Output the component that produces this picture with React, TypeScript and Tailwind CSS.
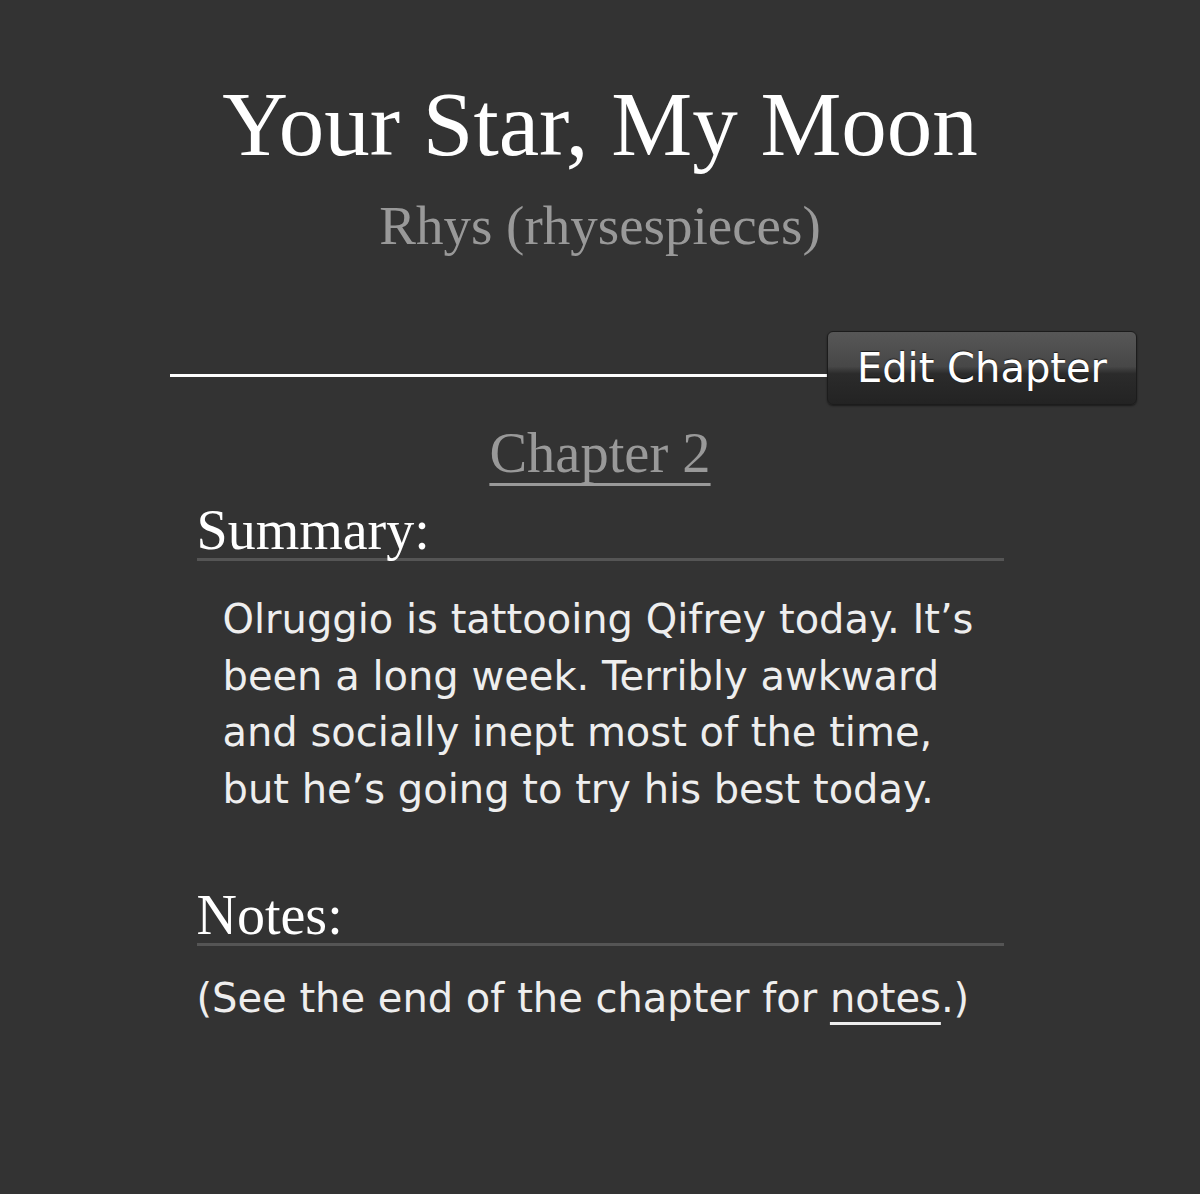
import React from 'react';

const serif = { fontFamily: '"Liberation Serif", Georgia, serif' };
const sans = { fontFamily: '"DejaVu Sans", Verdana, sans-serif' };

export default function App() {
  return (
    <div className="min-h-[1194px] bg-[#333333] text-white overflow-hidden">
      {/* Work header */}
      <div className="flex flex-col items-center pt-[75px]" style={serif}>
        <h1 className="text-[91px] leading-[100px] text-white">Your Star, My Moon</h1>
        <h2 className="text-[55px] leading-[60px] mt-[21px] text-[#999999]">Rhys (rhysespieces)</h2>
      </div>

      {/* Divider with edit button */}
      <div className="flex items-start ml-[170px] mr-[63px] mt-[75px]">
        <div className="flex-1 h-[3px] mt-[43px] bg-white" />
        <button
          className="w-[310px] h-[74px] rounded-[6px] border border-[#1c1c1c] bg-[linear-gradient(to_bottom,#575757_0%,#474747_48%,#2b2b2b_58%,#232323_100%)] text-[40px] leading-none text-white [text-shadow:0_-1px_1px_rgba(0,0,0,0.6)] shadow-[0_1px_2px_rgba(0,0,0,0.5)]"
          style={sans}
        >
          Edit Chapter
        </button>
      </div>

      {/* Chapter heading */}
      <div className="flex justify-center mt-[16px]" style={serif}>
        <a className="text-[56.5px] leading-[64px] text-[#999999] underline decoration-[3px] underline-offset-[11px] [text-decoration-skip-ink:none]">
          Chapter 2
        </a>
      </div>

      <div className="w-[807px] mx-auto mt-[17px]">
        {/* Summary */}
        <h3 className="text-[56px] leading-[56px] border-b-[3px] border-[#555555]" style={serif}>
          Summary:
        </h3>
        <p className="ml-[26px] mt-[30px] text-[40px] leading-[56.5px] text-[#eeeeee] w-[770px]" style={sans}>
          Olruggio is tattooing Qifrey today. It’s been a long week. Terribly awkward and socially inept most of the time, but he’s going to try his best today.
        </p>

        {/* Notes */}
        <h3 className="text-[56px] leading-[56px] border-b-[3px] border-[#555555] mt-[70px]" style={serif}>
          Notes:
        </h3>
        <p className="mt-[24px] text-[40px] leading-[56px] text-[#eeeeee]" style={sans}>
          (See the end of the chapter for <a className="underline decoration-[3px] underline-offset-[10px] [text-decoration-skip-ink:none]">notes</a>.)
        </p>
      </div>
    </div>
  );
}
